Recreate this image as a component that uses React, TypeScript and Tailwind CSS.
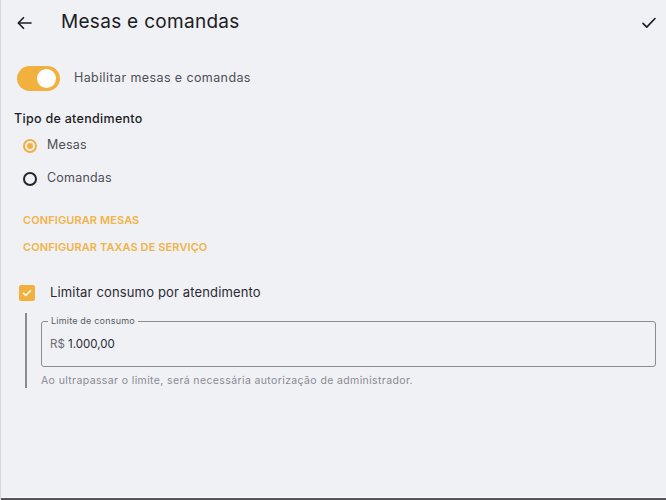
import React from "react";

export default function App() {
  return (
    <div className="w-[666px] h-[500px] bg-[#f0f1f5] border-l border-[#d6d7db] flex flex-col font-['Inter','Noto_Sans',sans-serif] overflow-hidden">
      <div className="flex-1 flex flex-col">
        {/* Header */}
        <div className="h-[44px] flex items-center pl-[15px] pr-[8px] pt-[1px]">
          <svg width="18" height="18" viewBox="0 0 24 24" fill="none" stroke="#1c1c24" strokeWidth="2.2" strokeLinecap="round" strokeLinejoin="round">
            <path d="M20 12H4" />
            <path d="M10 5l-7 7 7 7" />
          </svg>
          <div className="ml-[27px] text-[19px] text-[#1c1c24] tracking-[0.3px]">Mesas e comandas</div>
          <div className="flex-1" />
          <svg width="18" height="18" viewBox="0 0 24 24" fill="none" stroke="#1c1c24" strokeWidth="2.2" strokeLinecap="round" strokeLinejoin="round">
            <path d="M4 12.5l5 5L20 6" />
          </svg>
        </div>

        {/* Toggle */}
        <div className="flex items-center mt-[22px] pl-[16px]">
          <div className="w-[43px] h-[25px] rounded-full bg-[#f2b13e] flex items-center justify-end pr-[4px]">
            <div className="w-[19px] h-[19px] rounded-full bg-white" />
          </div>
          <div className="ml-[14px] text-[12.5px] text-[#4e4e56] tracking-[0.4px]">Habilitar mesas e comandas</div>
        </div>

        {/* Tipo de atendimento */}
        <div className="mt-[19px] pl-[13px] text-[12.5px] font-medium text-[#1c1c24] tracking-[0.3px]">Tipo de atendimento</div>

        <div className="flex items-center h-[18px] mt-[8px] pl-[22px]">
          <div className="w-[14px] h-[14px] rounded-full border-2 border-[#f2b13e] flex items-center justify-center">
            <div className="w-[6px] h-[6px] rounded-full bg-[#f2b13e]" />
          </div>
          <div className="ml-[10px] text-[12.5px] text-[#4e4e56] tracking-[0.2px]">Mesas</div>
        </div>
        <div className="flex items-center h-[18px] mt-[15px] pl-[22px]">
          <div className="w-[14px] h-[14px] rounded-full border-2 border-[#24242c]" />
          <div className="ml-[10px] text-[12.5px] text-[#4e4e56] tracking-[0.2px]">Comandas</div>
        </div>

        <div className="mt-[24px] pl-[22px] text-[11px] font-semibold text-[#f0b447] tracking-[0.1px]">CONFIGURAR MESAS</div>
        <div className="mt-[11px] pl-[22px] text-[11px] font-semibold text-[#f0b447] tracking-[0.1px]">CONFIGURAR TAXAS DE SERVIÇO</div>

        {/* Checkbox */}
        <div className="flex items-center mt-[27px] pl-[18px]">
          <div className="w-[16px] h-[16px] rounded-[2px] bg-[#f2b13e] flex items-center justify-center">
            <svg width="12" height="12" viewBox="0 0 24 24" fill="none" stroke="white" strokeWidth="3" strokeLinecap="round" strokeLinejoin="round">
              <path d="M5 12.5l4.5 4.5L19 7.5" />
            </svg>
          </div>
          <div className="ml-[15px] text-[13px] text-[#2a2a32] tracking-[0.15px]">Limitar consumo por atendimento</div>
        </div>

        {/* Limit field */}
        <div className="flex mt-[11px] pl-[24px] pr-[10px]">
          <div className="w-[2px] h-[75px] bg-[#8a8a8e]" />
          <div className="flex-1 ml-[14px] pt-[8px]">
            <div className="relative h-[46px] rounded-[3px] border border-[#8c8c90] flex items-center pl-[8px]">
              <div className="absolute -top-[7px] left-[6px] px-[3px] bg-[#f0f1f5] text-[9px] text-[#5c5c64] leading-[12px] tracking-[0.2px]">Limite de consumo</div>
              <div className="text-[11.5px] mt-[1px]">
                <span className="text-[#6c6c74]">R$ </span>
                <span className="text-[#2a2a32]">1.000,00</span>
              </div>
            </div>
            <div className="mt-[6px] text-[10.5px] text-[#8a8a92] tracking-[0.38px]">Ao ultrapassar o limite, será necessária autorização de administrador.</div>
          </div>
        </div>
      </div>
      <div className="h-[1px] bg-[#fafafa]" />
      <div className="h-[2px] bg-[#55555a]" />
    </div>
  );
}
